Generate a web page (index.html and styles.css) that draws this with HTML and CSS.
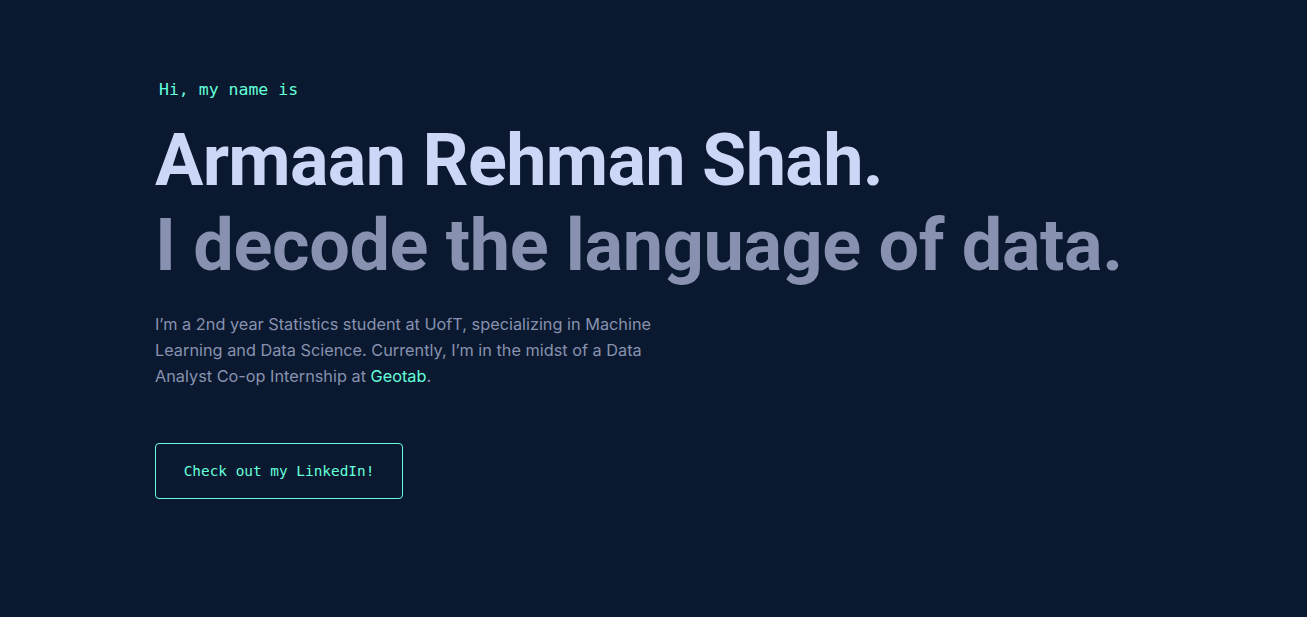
FILE: index.html
```html
<!DOCTYPE html>
<html lang="en">
<head>
<meta charset="utf-8">
<title>Armaan Rehman Shah</title>
<link rel="stylesheet" href="styles.css">
</head>
<body>
<main class="main">
  <section class="hero">
    <p class="hero-intro">Hi, my name is</p>
    <h1 class="hero-name">Armaan Rehman Shah.</h1>
    <h2 class="hero-tagline">I decode the language of data.</h2>
    <p class="hero-bio">I’m a 2nd year Statistics student at UofT, specializing in Machine Learning and Data Science. Currently, I’m in the midst of a Data Analyst Co-op Internship at <a class="link" href="#">Geotab</a>.</p>
    <a class="hero-button" href="#">Check out my LinkedIn!</a>
  </section>
</main>
</body>
</html>
```
FILE: styles.css
```css
html, body {
  margin: 0;
  padding: 0;
  background: #0a192f;
  height: 100%;
}
body {
  font-family: "Inter", "Roboto", sans-serif;
  color: #8892b0;
  overflow: hidden;
}
.main {
  padding: 0 155px;
}
.hero {
  display: flex;
  flex-direction: column;
  align-items: flex-start;
  padding-top: 79px;
}
.hero-intro {
  margin: 0 0 0 4px;
  font-family: "DejaVu Sans Mono", "Liberation Mono", monospace;
  font-size: 16.5px;
  line-height: 22px;
  color: #64ffda;
}
.hero-name,
.hero-tagline {
  font-family: "Roboto", "Inter", sans-serif;
  font-size: 72px;
  line-height: 85px;
  font-weight: 700;
  letter-spacing: -0.7px;
  white-space: nowrap;
}
.hero-name {
  margin: 17px 0 0;
  color: #ccd6f6;
}
.hero-tagline {
  margin: 0;
  letter-spacing: -0.35px;
  color: #8892b0;
}
.hero-bio {
  margin: 23px 0 0;
  max-width: 520px;
  font-size: 16.3px;
  line-height: 26px;
  color: #8892b0;
}
.link {
  color: #64ffda;
  text-decoration: none;
}
.hero-button {
  margin-top: 54px;
  box-sizing: border-box;
  width: 248px;
  height: 56px;
  display: flex;
  align-items: center;
  justify-content: center;
  border: 1px solid #64ffda;
  border-radius: 4px;
  font-family: "DejaVu Sans Mono", "Liberation Mono", monospace;
  font-size: 14.4px;
  color: #64ffda;
  text-decoration: none;
}
```
